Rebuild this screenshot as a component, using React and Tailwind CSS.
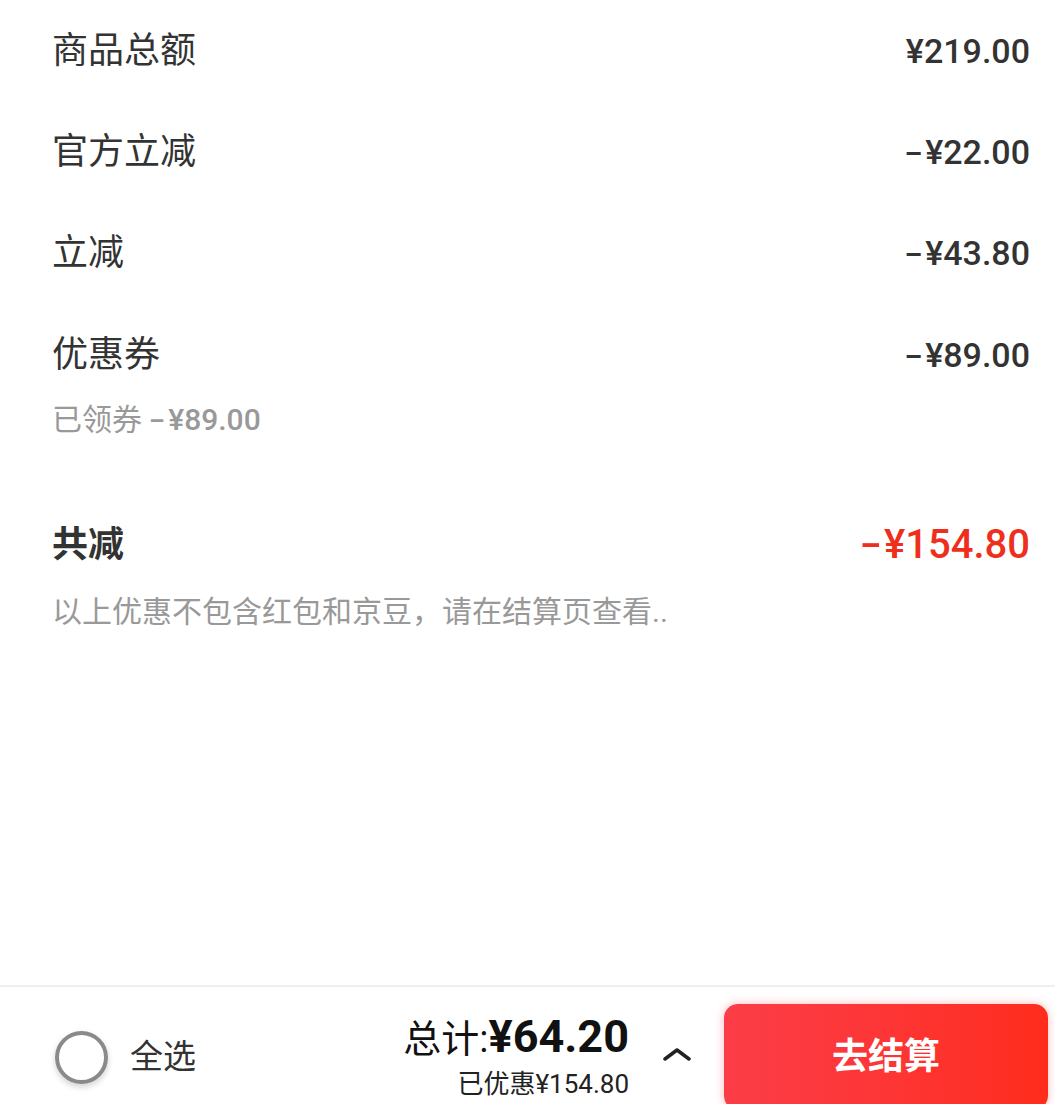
const font = { fontFamily: "Roboto, 'Noto Sans CJK SC', sans-serif" };

const rows = [
  { label: '商品总额', minus: false, value: '¥219.00' },
  { label: '官方立减', minus: true, value: '¥22.00' },
  { label: '立减', minus: true, value: '¥43.80' },
];

// DIN-style wide dash in front of negative amounts
const Amount = ({ minus, value, className }) => (
  <span className={className}>
    {minus && <span className="inline-block scale-x-[1.6] ml-[4px] mr-[6px]">-</span>}
    {value}
  </span>
);

const App = () => {
  return (
    <div className="h-[1104px] w-full overflow-hidden bg-white flex flex-col text-[#333]" style={font}>
      <div className="flex-1 pl-[52px] pr-[25px]">
        {rows.map((r) => (
          <div key={r.label} className="h-[101px] flex items-center justify-between">
            <span className="text-[36px] leading-[50px]">{r.label}</span>
            <Amount minus={r.minus} value={r.value} className="text-[34px] leading-[50px] font-medium" />
          </div>
        ))}

        {/* coupon row with sub line */}
        <div className="pt-[27px]">
          <div className="flex items-center justify-between">
            <span className="text-[36px] leading-[50px]">优惠券</span>
            <Amount minus value="¥89.00" className="text-[34px] leading-[50px] font-medium" />
          </div>
          <div className="mt-[20px] flex items-center text-[30px] leading-[40px] text-[#999]">
            <span>已领券</span>
            <Amount minus value="¥89.00" className="ml-[6px] font-medium" />
          </div>
        </div>

        <div className="mt-[80px] flex items-center justify-between">
          <span className="text-[36px] leading-[50px] font-bold">共减</span>
          <Amount minus value="¥154.80" className="text-[40px] leading-[50px] font-medium text-[#ef2f1d]" />
        </div>
        <div className="mt-[22px] text-[30px] leading-[40px] text-[#999]">
          以上优惠不包含红包和京豆，请在结算页查看..
        </div>
      </div>

      {/* bottom bar */}
      <div className="shrink-0 h-[119px] border-t-2 border-[#efefef]">
        <div className="h-[140px] flex items-center justify-between pl-[55px] pr-[7px]">
          <div className="flex items-center">
            <div className="w-[53px] h-[53px] rounded-full border-[4px] border-[#8a8a8a] shadow-[0_3px_6px_rgba(0,0,0,0.18)]" />
            <span className="ml-[22px] text-[33px] leading-[44px]">全选</span>
          </div>

          <div className="flex items-center">
            <div className="flex flex-col items-end">
              <div className="flex items-baseline leading-[48px] text-[#111]">
                <span className="text-[38px]">总计:</span>
                <span className="text-[45px] font-bold">¥64.20</span>
              </div>
              <div className="mt-[4px] text-[26px] leading-[34px] text-[#222]">已优惠¥154.80</div>
            </div>
            <svg className="ml-[33px] mt-[-6px]" width="30" height="14" viewBox="0 0 30 14" fill="none">
              <polyline points="3,12 15,3 27,12" stroke="#222" strokeWidth="3.5" strokeLinecap="round" strokeLinejoin="round" />
            </svg>
            <button className="ml-[32px] w-[324px] h-[106px] rounded-[14px] bg-gradient-to-r from-[#fb3d47] to-[#ff2c1b] shadow-[0_0_10px_rgba(255,60,60,0.35)] flex items-center justify-center">
              <span className="text-white text-[36px] font-bold leading-[50px]">去结算</span>
            </button>
          </div>
        </div>
      </div>
    </div>
  );
};

export default App;
